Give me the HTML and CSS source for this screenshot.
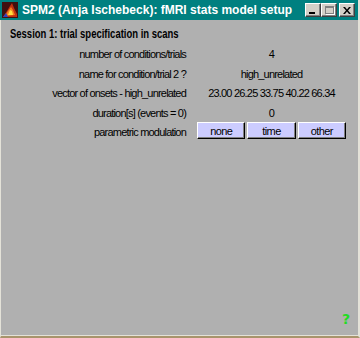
FILE: index.html
```html
<!DOCTYPE html>
<html lang="en">
<head>
    <meta charset="UTF-8">
    <title>SPM2 (Anja Ischebeck): fMRI stats model setup</title>
    <link rel="stylesheet" href="styles.css">
</head>
<body>
    <div class="window">
        <div class="titlebar">
            <svg class="app-icon" width="16" height="16" viewBox="0 0 16 16">
                <rect width="16" height="16" fill="#401010"/>
                <path d="M1 15 L5 9 L8 4 L10 1 L12 6 L15 12 L15 15 Z" fill="#c03010"/>
                <path d="M3 14 L6 9 L9 5 L11 8 L13 13 Z" fill="#f08020"/>
                <path d="M6 13 L8 8 L10 9 L11 13 Z" fill="#ffe040"/>
                <path d="M1 15 L4 11 L6 15 Z" fill="#3040c0"/>
            </svg>
            <span class="title">SPM2 (Anja Ischebeck): fMRI stats model setup</span>
            <div class="title-buttons">
                <button class="tb-btn"><span class="glyph-min"></span></button>
                <button class="tb-btn disabled"><span class="glyph-max"></span></button>
                <button class="tb-btn close">
                    <svg width="8" height="7" viewBox="0 0 8 7">
                        <path d="M0 0h2l2 2.5L6 0h2L5 3.5 8 7H6L4 4.5 2 7H0l3-3.5z" fill="#000"/>
                    </svg>
                </button>
            </div>
        </div>

        <div class="content">
            <div class="session"><span>Session 1: trial specification in scans</span></div>

            <div class="form">
                <div class="label">number of conditions/trials</div>
                <div class="value">4</div>

                <div class="label">name for condition/trial 2 ?</div>
                <div class="value">high_unrelated</div>

                <div class="label">vector of onsets - high_unrelated</div>
                <div class="value">23.00 26.25 33.75 40.22 66.34</div>

                <div class="label">duration[s] (events = 0)</div>
                <div class="value">0</div>

                <div class="label">parametric modulation</div>
                <div class="value choices">
                    <button class="choice">none</button>
                    <button class="choice">time</button>
                    <button class="choice">other</button>
                </div>
            </div>

            <div class="help">?</div>
        </div>
    </div>
</body>
</html>
```

FILE: styles.css
```css
* {
    box-sizing: border-box;
    margin: 0;
    padding: 0;
}

body {
    width: 360px;
    height: 338px;
    overflow: hidden;
    background: #b0b0b0;
    font-family: "Liberation Sans", Arial, sans-serif;
    color: #000;
}

.window {
    width: 360px;
    height: 338px;
    display: flex;
    flex-direction: column;
    border-left: 1px solid #e4e2d8;
    border-right: 2px solid #e4e2d8;
    border-bottom: 2px solid #a8946c;
    box-shadow: inset 0 -1px 0 #e4e2d8;
    background: #b0b0b0;
}

.titlebar {
    height: 20px;
    background: #008080;
    display: flex;
    align-items: center;
    padding: 0 3px 0 2px;
    margin-left: -1px;
}

.app-icon {
    flex: none;
    margin-right: 4px;
}

.title {
    flex: 1;
    color: #fff;
    font-weight: bold;
    font-size: 12px;
    white-space: nowrap;
}

.title-buttons {
    display: flex;
    align-items: center;
}

.tb-btn {
    width: 16px;
    height: 14px;
    background: #d4d0c8;
    border: 1px solid;
    border-color: #fff #404040 #404040 #fff;
    box-shadow: inset -1px -1px 0 #808080;
    display: flex;
    align-items: center;
    justify-content: center;
}

.tb-btn.close {
    margin-left: 2px;
}

.glyph-min {
    width: 6px;
    height: 2px;
    background: #000;
    margin-top: 6px;
    margin-left: -2px;
}

.glyph-max {
    width: 9px;
    height: 8px;
    border: 1px solid #808080;
    border-top-width: 2px;
    box-shadow: 1px 1px 0 #fff;
}

.content {
    flex: 1;
    display: flex;
    flex-direction: column;
    padding-top: 7px;
}

.session {
    font-weight: bold;
    font-size: 12px;
    line-height: 14px;
    padding-left: 9px;
    white-space: nowrap;
}

.session span {
    display: inline-block;
    transform: scaleX(0.79);
    transform-origin: left center;
}

.form {
    display: grid;
    grid-template-columns: 185px 149px;
    grid-template-rows: 20px 19px 20px 19px 20px;
    column-gap: 11px;
    margin-top: 3px;
    font-size: 11px;
    letter-spacing: -0.8px;
}

.label {
    text-align: right;
    align-self: center;
    white-space: nowrap;
}

.value {
    text-align: center;
    align-self: center;
    white-space: nowrap;
}

.choices {
    display: flex;
    gap: 2px;
    align-self: start;
}

.choice {
    flex: 1;
    height: 17px;
    background: #ccccff;
    border: 1px solid;
    border-color: #fff #000 #000 #fff;
    box-shadow: inset -1px -1px 0 #808080;
    font-family: inherit;
    font-size: 11px;
    letter-spacing: -0.6px;
    color: #000;
}

.help {
    margin-top: auto;
    align-self: flex-end;
    margin-right: 8px;
    margin-bottom: 10px;
    color: #22dd22;
    font-family: "DejaVu Sans", sans-serif;
    font-weight: bold;
    font-size: 14px;
    line-height: 14px;
}
```
